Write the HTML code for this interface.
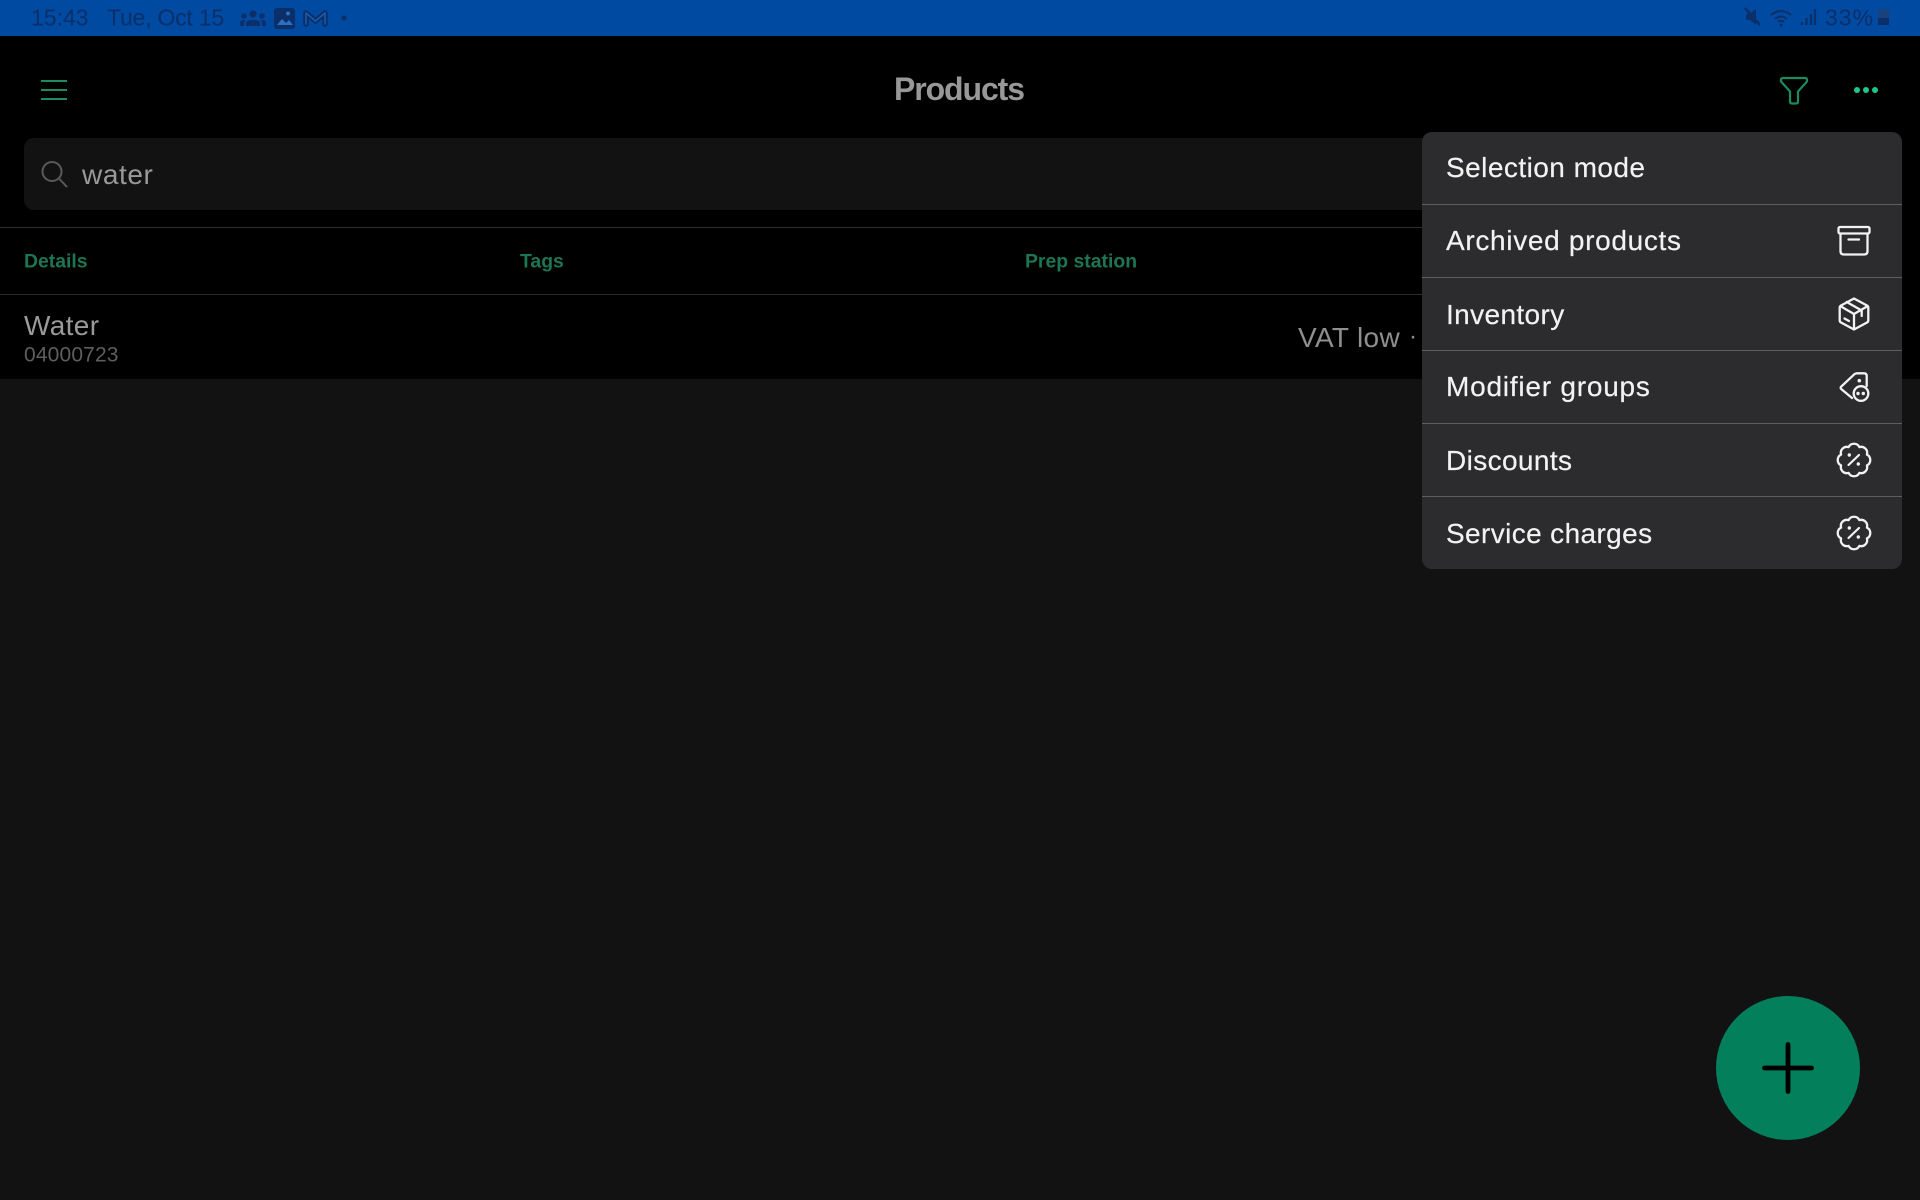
<!DOCTYPE html>
<html lang="en">
<head>
<meta charset="utf-8">
<title>Products</title>
<style>
html,body{margin:0;padding:0;width:1920px;height:1200px;overflow:hidden;background:#121212}
body{position:relative;font-family:"Liberation Sans",sans-serif}
.r{position:absolute}
.t{position:absolute;white-space:nowrap;line-height:1;transform:translateY(-50%)}
.m{font-size:28px;letter-spacing:.38px;color:#f2f2f2;left:1446px;-webkit-text-stroke:.2px #f2f2f2}
.h{font-size:19.4px;font-weight:700;color:#1d7553;top:262px}
.s{font-size:23px;color:#0b2f69;top:18px}
svg{position:absolute;left:0;top:0}
</style>
</head>
<body>
<div class="r" style="left:0;top:0;width:1920px;height:36px;background:#004aa1"></div>
<div class="r" style="left:0;top:36px;width:1920px;height:343px;background:#000"></div>
<div class="r" style="left:24px;top:138px;width:1420px;height:72px;background:#121212;border-radius:10px"></div>
<div class="r" style="left:0;top:227px;width:1422px;height:1px;background:#2c2c2c"></div>
<div class="r" style="left:0;top:294px;width:1422px;height:1px;background:#2c2c2c"></div>

<span class="t s" style="left:31px">15:43</span>
<span class="t s" style="left:107px;letter-spacing:-.22px">Tue, Oct 15</span>
<span class="t s" style="left:1825px;letter-spacing:1px">33%</span>

<span class="t" style="left:894px;top:89px;font-size:32px;font-weight:700;letter-spacing:-1.1px;color:#989898">Products</span>
<span class="t" style="left:82px;top:175px;font-size:28px;letter-spacing:.6px;color:#999">water</span>
<span class="t h" style="left:24px">Details</span>
<span class="t h" style="left:520px">Tags</span>
<span class="t h" style="left:1025px">Prep station</span>
<span class="t" style="left:24px;top:326px;font-size:28px;letter-spacing:.35px;color:#9a9a9a">Water</span>
<span class="t" style="left:24px;top:355px;font-size:21px;letter-spacing:.15px;color:#5e5e5e">04000723</span>
<span class="t" style="left:1298px;top:338px;font-size:28px;letter-spacing:.35px;color:#8f8f8f">VAT low</span>
<span class="t" style="left:1409px;top:337px;font-size:24px;color:#8f8f8f">·</span>

<div class="r" style="left:1422px;top:132px;width:480px;height:437px;background:#2c2c2e;border-radius:10px"></div>
<div class="r" style="left:1422px;top:204px;width:480px;height:1px;background:#5e5e60"></div>
<div class="r" style="left:1422px;top:277px;width:480px;height:1px;background:#5e5e60"></div>
<div class="r" style="left:1422px;top:350px;width:480px;height:1px;background:#5e5e60"></div>
<div class="r" style="left:1422px;top:423px;width:480px;height:1px;background:#5e5e60"></div>
<div class="r" style="left:1422px;top:496px;width:480px;height:1px;background:#5e5e60"></div>

<span class="t m" style="top:168px;letter-spacing:.46px">Selection mode</span>
<span class="t m" style="top:241px;letter-spacing:.68px">Archived products</span>
<span class="t m" style="top:314.500px">Inventory</span>
<span class="t m" style="top:387px;letter-spacing:.78px">Modifier groups</span>
<span class="t m" style="top:460.500px">Discounts</span>
<span class="t m" style="top:533.500px">Service charges</span>

<div class="r" style="left:1716px;top:996px;width:144px;height:144px;border-radius:50%;background:#047f5b"></div>

<svg width="1920" height="1200" viewBox="0 0 1920 1200" fill="none">
  <!-- status left -->
  <g fill="#0b2f69">
    <circle cx="253" cy="14" r="3.6"/><circle cx="244" cy="16" r="2.8"/><circle cx="262" cy="16" r="2.8"/>
    <path d="M240 26v-3q0-3 4-3h2q-2 1-2 3v3zM246 26v-2q0-4 5-4h4q5 0 5 4v2zM266 26v-3q0-3-4-3h-2q2 1 2 3v3z"/>
    <rect x="274" y="8" width="21" height="21" rx="3"/>
    <circle cx="344" cy="18" r="2.6"/>
  </g>
  <path d="M277 25l5-6 4 4 3-3 4 5z" fill="#2f6fc0"/>
  <circle cx="288" cy="13.500" r="2" fill="#2f6fc0"/>
  <path d="M306 24V13l9.500 8 9.500-8v11" stroke="#0b2f69" stroke-width="5.500" stroke-linejoin="round" stroke-linecap="round"/>
  <path d="M306 24V13l9.500 8 9.500-8v11" stroke="#1a5cac" stroke-width="1.500" stroke-linejoin="round" stroke-linecap="round"/>
  <!-- status right -->
  <path d="M1746 14h4l6-5v16l-6-5h-4z" fill="#0b2f69"/>
  <path d="M1745 8l15 17" stroke="#0b2f69" stroke-width="2.500"/>
  <path d="M1771 15q10-8 20 0M1775 19q6-5 12 0M1778 22q3-2.500 6 0" stroke="#0b2f69" stroke-width="2"/>
  <circle cx="1781" cy="25" r="1.500" fill="#0b2f69"/>
  <path d="M1802 25v-3M1806.500 25v-7M1811 25V14M1815 25V9" stroke="#0b2f69" stroke-width="2.200"/>
  <rect x="1878" y="9" width="11" height="16" rx="1.500" fill="#17427f"/>
  <rect x="1878" y="18" width="11" height="7" rx="1" fill="#0b2f69"/>
  <!-- header -->
  <path d="M41 81h26M41 90h26M41 99h26" stroke="#1d8a5f" stroke-width="2"/>
  <path d="M1783 78h22q2 0 2 2v1.500l-9 10v10q0 2-2 2h-4q-2 0-2-2v-10l-9-10V80q0-2 2-2z" stroke="#1c8a60" stroke-width="2.200" stroke-linejoin="round"/>
  <g fill="#1fc887"><circle cx="1857" cy="90" r="3"/><circle cx="1866" cy="90" r="3"/><circle cx="1875" cy="90" r="3"/></g>
  <circle cx="52" cy="171.500" r="9.500" stroke="#5a5a5a" stroke-width="2"/>
  <path d="M59 178.500l8 8.500" stroke="#5a5a5a" stroke-width="2"/>
  <!-- plus -->
  <path d="M1764.500 1068h47M1788 1044.500v47" stroke="#000" stroke-width="4.800" stroke-linecap="round"/>
  <!-- menu icons -->
  <g stroke="#f2f2f2" stroke-width="2.300" stroke-linecap="round" stroke-linejoin="round">
    <!-- archive -->
    <rect x="1838.500" y="227" width="31" height="6.500" rx="1.500"/>
    <path d="M1840.500 233.500V251q0 3.500 3.500 3.500h20q3.500 0 3.500-3.500V233.500M1848.500 239.500h10.500"/>
    <!-- box -->
    <path d="M1854 298.500l13 7q1.300.7 1.300 2v13q0 1.300-1.300 2l-13 7-13-7q-1.300-.7-1.300-2v-13q0-1.300 1.300-2z"/>
    <path d="M1841 306.500l13 7.500 13-7.500M1854 314v15M1846.700 302l15 8.500v5.500M1844.500 318.500l4.500 2.500"/>
    <!-- tag -->
    <path d="M1866.700 386V376q0-2.700-2.700-2.700h-7q-1.500 0-2.700 1l-12.800 12q-1.800 1.500 0 3l10.500 8.700"/>
    <circle cx="1861" cy="393.500" r="7.300"/>
  </g>
  <circle cx="1859.300" cy="380.700" r="1.800" fill="#f2f2f2"/>
  <circle cx="1858" cy="393.500" r="1.700" fill="#f2f2f2"/><circle cx="1863.300" cy="393.500" r="1.700" fill="#f2f2f2"/>
  <!-- badges -->
  <g transform="translate(1854 460)">
    <path d="M5.400-12.900A6 6 0 0 1 12.900-5.400A6 6 0 0 1 12.900 5.400A6 6 0 0 1 5.400 12.900A6 6 0 0 1-5.400 12.900A6 6 0 0 1-12.900 5.400A6 6 0 0 1-12.900-5.400A6 6 0 0 1-5.400-12.900A6 6 0 0 1 5.400-12.900Z" stroke="#f2f2f2" stroke-width="2.300" stroke-linejoin="round"/>
    <path d="M-5.500 5L5-5" stroke="#f2f2f2" stroke-width="2.200" stroke-linecap="round"/>
    <circle cx="-4.700" cy="-5" r="1.700" fill="#f2f2f2"/><circle cx="4.300" cy="4" r="1.700" fill="#f2f2f2"/>
  </g>
  <g transform="translate(1854 533)">
    <path d="M5.400-12.900A6 6 0 0 1 12.900-5.400A6 6 0 0 1 12.900 5.400A6 6 0 0 1 5.400 12.900A6 6 0 0 1-5.400 12.900A6 6 0 0 1-12.900 5.400A6 6 0 0 1-12.900-5.400A6 6 0 0 1-5.400-12.900A6 6 0 0 1 5.400-12.900Z" stroke="#f2f2f2" stroke-width="2.300" stroke-linejoin="round"/>
    <path d="M-5.500 5L5-5" stroke="#f2f2f2" stroke-width="2.200" stroke-linecap="round"/>
    <circle cx="-4.700" cy="-5" r="1.700" fill="#f2f2f2"/><circle cx="4.300" cy="4" r="1.700" fill="#f2f2f2"/>
  </g>
</svg>
</body>
</html>
